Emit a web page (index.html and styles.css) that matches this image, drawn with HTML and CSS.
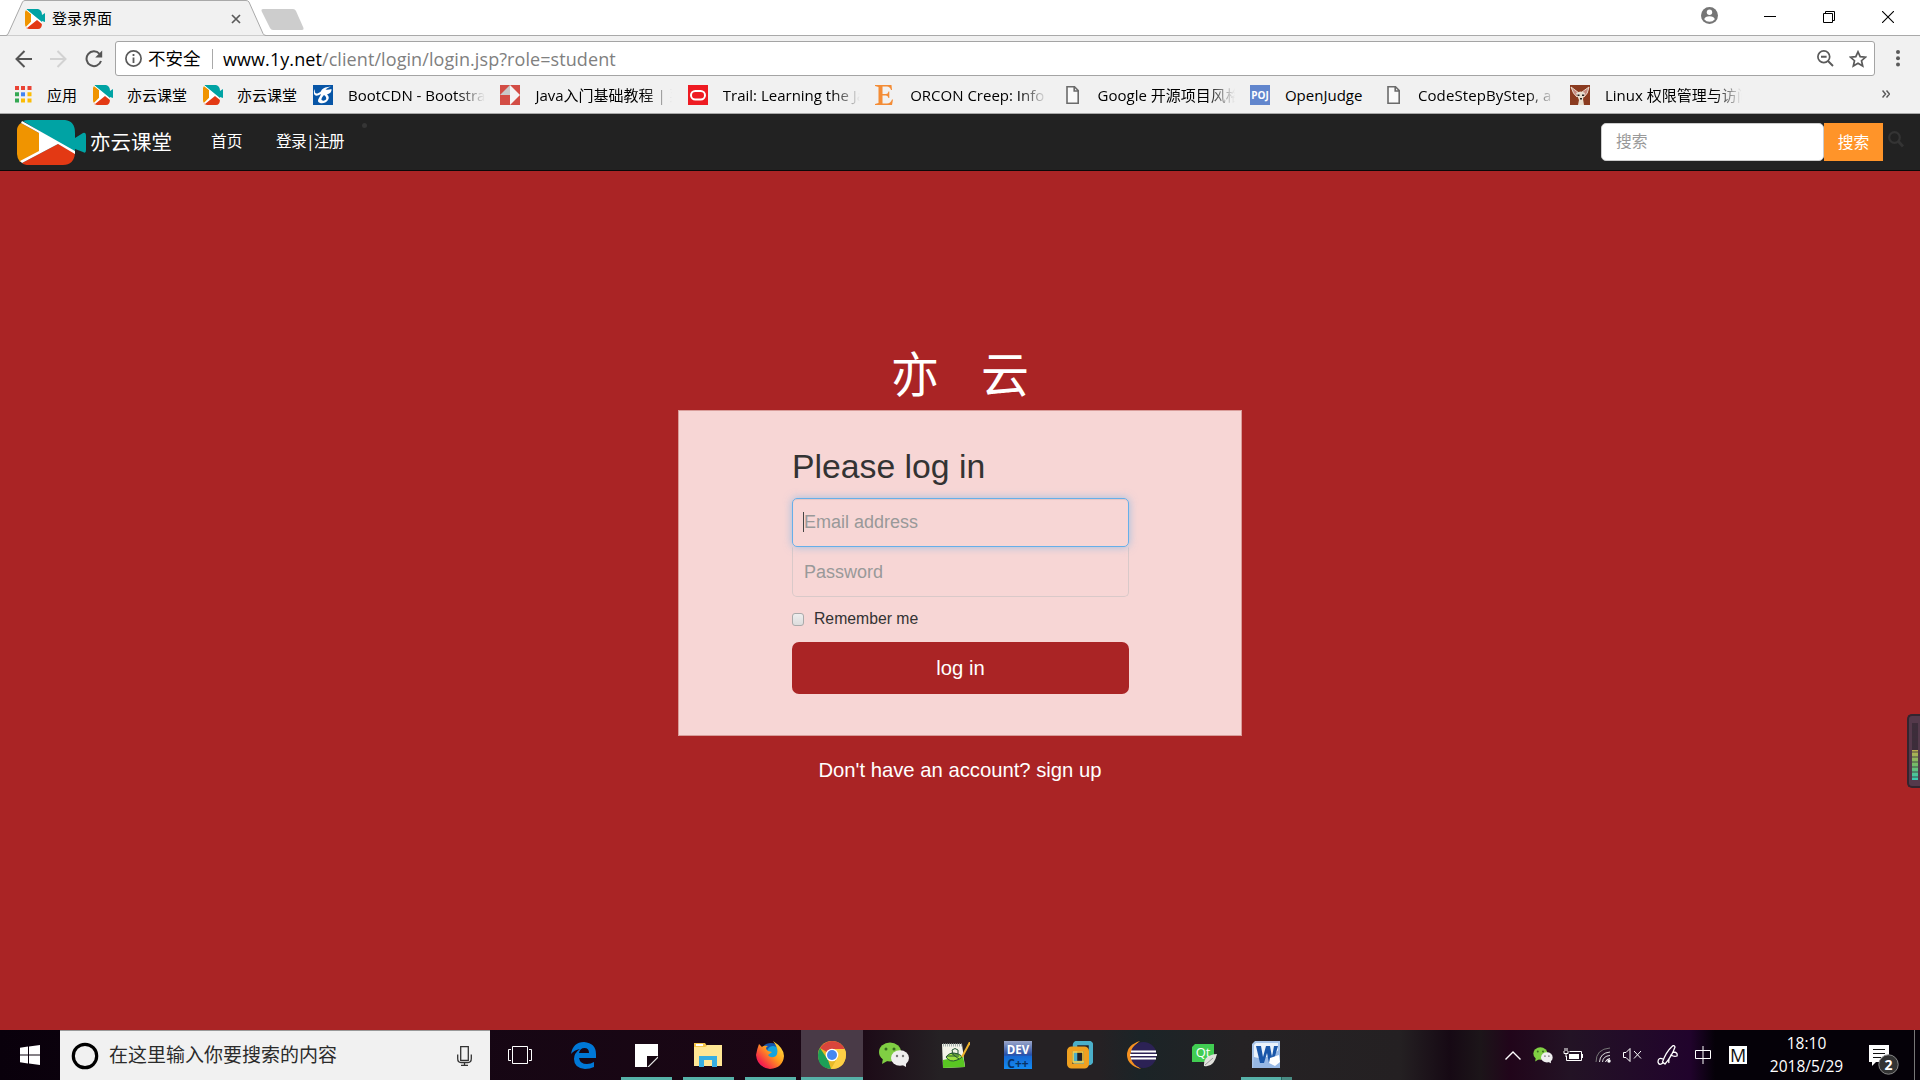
FILE: index.html
```html
<!DOCTYPE html>
<html lang="zh-CN">
<head>
<meta charset="utf-8">
<title>登录界面</title>
<link rel="stylesheet" href="styles.css">
</head>
<body>
<svg class="defs" width="0" height="0">
  <symbol id="camera" viewBox="0 0 69 45">
    <path fill="#00a3a4" d="M6 1Q8 0 12 0H48Q58 1 58 13V18L66 13Q69 12 69 16V30Q69 34 66 32L58 29V33Z"/>
    <path fill="#f09400" d="M4 3L22 13V32L3 42Q0 38 0 34V10Q0 6 4 3Z"/>
    <path fill="#e33914" d="M41 24L58 33Q57 45 46 45H12Q7 45 5 43Z"/>
    <path fill="#fff" d="M5 1L58 31V34L41 24L5 43L3 41L22 31V13L4 3Z"/>
  </symbol>
  <symbol id="camera-small" viewBox="0 0 20 20">
    <path fill="#00a3a4" d="M1 0H13Q17 1 17 6L20 4V13L17 12V14Z"/>
    <path fill="#f09400" d="M1 1L6 5V13L1 18Q0 17 0 15V3Z"/>
    <path fill="#e33914" d="M12 10L17 14Q17 20 13 20H4L1 19Z"/>
    <path fill="#fff" d="M1 0L17 13V15L12 11L2 19L1 18L6 13V5L1 1Z"/>
  </symbol>
  <symbol id="doc" viewBox="0 0 20 20"><path d="M4 1.8H11.5L15.2 5.5V18.2H4ZM11.2 2V6H15" fill="#fafafa" stroke="#6b6b6b" stroke-width="1.6"/></symbol>
  <symbol id="wechat" viewBox="0 0 30 26">
    <ellipse cx="11" cy="10" rx="11" ry="9.5" fill="#80cf43"/><path d="M4 16L3 22L10 18Z" fill="#80cf43"/>
    <circle cx="7" cy="7" r="1.5" fill="#386b20"/><circle cx="15" cy="7" r="1.5" fill="#386b20"/>
    <ellipse cx="21" cy="16" rx="9" ry="7.8" fill="#efefef"/><path d="M22 22L27 25V20Z" fill="#efefef"/>
    <circle cx="18" cy="14" r="1.2" fill="#777"/><circle cx="24" cy="14" r="1.2" fill="#777"/>
  </symbol>
</svg>

<header class="tabs">
  <svg class="tab-shape" width="310" height="36"><path d="M0 35.5H6Q7.500 35.500 8.500 33L22.500 2Q23.300.500 25 .500H246Q248 .500 249 2L263 33.500Q264 35.500 266 35.500H310" fill="#f1f1f1" stroke="#a9a9a9"/><path d="M263 9H293Q295 9 296 11L303.500 28Q304 30 302 30H273Q271 30 270 28L261.500 11Q261 9 263 9Z" fill="#cdcdcd"/></svg>
  <div class="tab"><svg width="20" height="20"><use href="#camera-small"/></svg><span class="tab-title">登录界面</span>
    <svg width="10" height="10"><path d="M1 1L9 9M9 1L1 9" stroke="#5a5a5a" stroke-width="1.700"/></svg></div>
  <div class="window-buttons">
    <svg width="17" height="17" viewBox="0 0 17 17"><circle cx="8.500" cy="8.500" r="8.500" fill="#757575"/><circle cx="8.500" cy="5.200" r="2.700" fill="#fff"/><path d="M3.200 12.200Q4 9.300 8.500 9.300T13.800 12.200Q11.800 14.800 8.500 14.800T3.200 12.200Z" fill="#fff"/></svg>
    <svg width="12" height="12"><path d="M0 5.500H12" stroke="#000"/></svg>
    <svg width="12" height="12"><path d="M.500 2.500H9.500V11.500H.500ZM2.500 2.500V.500H11.500V9.500H9.500" fill="none" stroke="#000"/></svg>
    <svg width="12" height="12"><path d="M0 0L12 12M12 0L0 12" stroke="#000" stroke-width="1.100"/></svg>
  </div>
</header>

<div class="toolbar">
  <svg width="17" height="18"><path d="M17 9H2M9.500 1L1.500 9L9.500 17" fill="none" stroke="#555" stroke-width="2"/></svg>
  <svg width="17" height="18"><path d="M0 9H15M7.500 1L15.500 9L7.500 17" fill="none" stroke="#d2d2d2" stroke-width="2"/></svg>
  <svg width="18" height="18"><path d="M14.500 3.800A7.400 7.400 0 1 0 16 11" fill="none" stroke="#555" stroke-width="2"/><path d="M17.200 .500V7.500H10.200Z" fill="#555"/></svg>
  <div class="address">
    <svg width="17" height="17"><circle cx="8.500" cy="8.500" r="7.600" fill="none" stroke="#5a5a5a" stroke-width="1.700"/><path d="M8.500 7.500V13M8.500 4V6" stroke="#5a5a5a" stroke-width="1.800"/></svg>
    <span class="insecure">不安全</span>
    <span class="url"><b>www.1y.net</b>/client/login/login.jsp?role=student</span>
    <svg class="zoom-icon" width="17" height="17"><circle cx="6.800" cy="6.800" r="5.900" fill="none" stroke="#5a5a5a" stroke-width="1.700"/><path d="M4 6.800H9.600M11 11L16 16" stroke="#5a5a5a" stroke-width="1.900"/></svg>
    <svg width="18" height="18"><path d="M9 1.800L11.200 6.600L16.600 7.100L12.500 10.700L13.700 16L9 13.200L4.300 16L5.500 10.700L1.400 7.100L6.800 6.600Z" fill="none" stroke="#5a5a5a" stroke-width="1.700"/></svg>
  </div>
  <svg width="4" height="17"><g fill="#5a5a5a"><circle cx="2" cy="2" r="2"/><circle cx="2" cy="8.200" r="2"/><circle cx="2" cy="14.500" r="2"/></g></svg>
</div>

<nav class="bookmarks">
  <a class="apps"><svg width="17" height="17"><g fill="#ea4335"><path d="M0 0h4v4H0zM6 0h4v4H6zM12.500 0h4v4h-4z"/></g><path fill="#34a853" d="M0 6.300h4v4H0zM0 12.500h4v4H0z"/><path fill="#4285f4" d="M6 6.300h4v4H6z"/><path fill="#fbbc05" d="M12.500 6.300h4v4h-4zM6 12.500h4v4H6zM12.500 12.500h4v4h-4z"/></svg><span>应用</span></a>
  <a class="w110"><svg width="20" height="20"><use href="#camera-small"/></svg><span>亦云课堂</span></a>
  <a class="w110"><svg width="20" height="20"><use href="#camera-small"/></svg><span>亦云课堂</span></a>
  <a><svg width="20" height="20"><path fill="#0755a6" d="M0 0H20V20H0Z"/><path fill="#fff" d="M2 4Q1 9 4.500 8.500Q8 7.500 9 4.500Q11 2 18 1.500Q15 2.500 12.500 4.500Q15 5 18.500 4Q19 8 14 9.500Q17 12 15 15Q12 19 7 18Q3.500 17 6 13Q7.500 10.500 8 9Q2.500 12.500 1 9Q0 6 2 4ZM11 10Q8 13 8.500 15Q11 16.500 13 14.500Q14 12 11 10Z" fill-rule="evenodd"/></svg><span class="fade">BootCDN - Bootstrap</span></a>
  <a><svg width="20" height="20"><path fill="#d34d45" d="M0 0H20V20H0Z"/><path fill="#c9c9c9" d="M0 10L10 0V10Z"/><path fill="#f4f4f4" d="M10 0L20 10L10 20Z"/></svg><span class="fade java">Java入门基础教程 | 菜鸟</span></a>
  <a><svg width="20" height="20"><path fill="#ee1b22" d="M0 0H20V20H0Z"/><rect x="3" y="6" width="14" height="8.500" rx="4.250" fill="none" stroke="#fff" stroke-width="2"/></svg><span class="fade trail">Trail: Learning the Java</span></a>
  <a><svg width="20" height="20"><path fill="#f48c35" d="M0 0H16.500L17 5H16Q15 1.500 12 1.500H7.500V9H11Q13 9 13.500 6.500H14.300V13H13.500Q13 10.500 11 10.500H7.500V18.500H12Q15.500 18.500 17 14.500H18L17 20H0V19L3.500 18V2L0 1Z"/></svg><span class="fade orcon">ORCON Creep: Info</span></a>
  <a><svg width="20" height="20"><use href="#doc"/></svg><span class="fade google">Google 开源项目风格</span></a>
  <a class="w134"><svg width="20" height="20"><path fill="#6286cd" d="M0 0H20V20H0Z"/><text x="10" y="14" text-anchor="middle" font-size="10" font-weight="bold" fill="#fff">POJ</text></svg><span class="judge">OpenJudge</span></a>
  <a class="w186"><svg width="20" height="20"><use href="#doc"/></svg><span class="fade step">CodeStepByStep, a</span></a>
  <a><svg width="20" height="20"><path fill="#8b3b20" d="M0 0H20V20H0Z"/><path d="M1 2L9 8L7 12Q3 9 1 2ZM19 2L12 7L14 12Q18 9 19 2Z" fill="#c68a80" stroke="#ead8c8"/><path d="M6 8Q11 5 15 8L13 14L14 20H8L9 15Z" fill="#e9dfd0"/><path d="M7.500 9.500h2v1.500h-2zM12 9.500h2v1.500h-2zM10 13h2v1.500h-2z" fill="#222"/></svg><span class="fade linux">Linux 权限管理与访问</span></a>
  <svg class="more" width="8" height="8"><path d="M.500.500L3.500 4L.500 7.500M4.500.500L7.500 4L4.500 7.500" fill="none" stroke="#5a5a5a" stroke-width="1.500"/></svg>
</nav>

<nav class="site-nav">
  <svg width="69" height="45"><use href="#camera"/></svg>
  <a class="brand">亦云课堂</a><a class="home">首页</a><a class="auth">登录|注册</a><i class="dot"></i>
  <form class="search"><input placeholder="搜索"><button type="button">搜索</button>
    <svg width="16" height="17"><circle cx="6.500" cy="6.500" r="5.300" fill="none" stroke="#343434" stroke-width="2.200"/><path d="M10.500 10.500L15 15.500" stroke="#343434" stroke-width="2.800"/></svg></form>
</nav>

<main>
  <h1>亦<span>云</span></h1>
  <form class="login">
    <h2>Please log in</h2>
    <div class="email"><input placeholder="Email address"><i class="caret"></i></div>
    <input class="password" type="password" placeholder="Password">
    <label><i class="check"></i>Remember me</label>
    <button type="button">log in</button>
  </form>
  <p>Don't have an account? sign up</p>
  <aside><div class="meter"></div></aside>
</main>

<footer>
  <div class="start"><svg width="20" height="20"><path fill="#fff" d="M0 2.700L8 1.600V9.500H0ZM9 1.500L20 0V9.500H9ZM0 10.500H8V18.400L0 17.300ZM9 10.500H20V20L9 18.500Z"/></svg></div>
  <div class="task-search"><svg width="28" height="28"><circle cx="14" cy="14" r="11.700" fill="none" stroke="#000" stroke-width="3.200"/></svg><span>在这里输入你要搜索的内容</span>
    <svg width="15" height="20"><path d="M3.700.700H11.300V14.300H3.700ZM.700 8.500V12.500Q.700 16.500 4 16.500H11Q14.300 16.500 14.300 12.500V8.500M7.500 16.500V19.500M4 19.300H11" stroke="#333" stroke-width="1.300" fill="none"/></svg></div>
  <div class="apps-bar">
    <div><svg width="24" height="18"><path d="M4.500.500H19.500V17.500H4.500ZM3 3.500H.500V14.500H3M21 3.500H23.500V14.500H21" fill="none" stroke="#fff"/></svg></div>
    <div><svg width="25" height="27"><path d="M0 12Q2 0 13 0Q25 1 25 12V16H8Q9 22 16 22Q20 22 23 20V25Q19 27 14 27Q3 26 3 17Q3 11 9 7Q3 8 0 12ZM8 11H18Q18 6 13.500 6Q9 6 8 11Z" fill="#0078d7"/></svg></div>
    <div class="open"><svg width="23" height="23"><path fill="#fff" d="M0 0H23V12H12V23H0Z"/><path fill="#ddd" d="M12 23L23 12V23Z"/><path fill="#160611" d="M12 12H23L12 23Z"/><path fill="#160611" d="M14 23L23 14V23Z"/></svg></div>
    <div class="open"><svg width="28" height="24"><path fill="#f6c64c" d="M0 1H10L13 4H28V20H0Z"/><path fill="#ffe694" d="M0 3H10L13 2H28V23H0Z"/><path fill="#f6c64c" d="M0 0H11L13 3L11 4H0Z"/><path fill="#fff" d="M2 1h7v2H2z"/><path fill="#36aee2" d="M5 13H23V24H18V17H10V24H5Z"/></svg></div>
    <div class="open"><svg width="28" height="28"><defs><linearGradient id="ff" x1="1" y1="0" x2="0" y2="1"><stop stop-color="#fff14a"/><stop offset=".450" stop-color="#ff9b1d"/><stop offset=".800" stop-color="#f5224b"/><stop offset="1" stop-color="#d91c96"/></linearGradient></defs><circle cx="15" cy="13" r="11" fill="#1656ae"/><circle cx="17" cy="11" r="6" fill="#14a3de"/><path fill="url(#ff)" d="M3 3L6 6Q8 4 12 5Q8 7 12 10L16 11L12 14Q15 18 20 15Q24 9 17 0Q28 7 28 15Q27 27 14 28Q1 26 0 14Q1 8 3 3Z"/></svg></div>
    <div class="open active"><svg width="28" height="28"><circle cx="14" cy="14" r="14" fill="#e8b927"/><path d="M14 14L2 7Q7 0 14 0Q23 0 26.500 8H14Z" fill="#d9453c"/><path d="M2 7L10 19L13 28Q0 27 0 14Q0 10 2 7Z" fill="#1da057"/><path d="M26.500 8Q28 10 28 14Q27 28 13 28L20 16L16 8Z" fill="#fdcf45"/><circle cx="14" cy="14" r="6.300" fill="#fff"/><circle cx="14" cy="14" r="5" fill="#4688f1"/></svg></div>
    <div><svg width="30" height="26"><use href="#wechat"/></svg></div>
    <div><svg width="28" height="27"><path fill="#f3f3e8" d="M0 2H20L23 25L1 26Z"/><path d="M1 3H20" stroke="#a4adaa" stroke-width="3" stroke-dasharray="1 1"/><path d="M1 18L21 14L23 25L1 26Z" fill="#59c622"/><path d="M4 15Q8 9 16 12T15 18Q8 21 4 15" fill="#9dde42" stroke="#245532"/><path d="M10 8Q13 5 16 8V12H11ZM5 14H17M9 11L17 17" fill="none" stroke="#245532"/><path d="M28 0L20 15" stroke="#efb32b" stroke-width="2"/></svg></div>
    <div><svg width="28" height="28"><defs><linearGradient id="dev" x2="0" y2="1"><stop stop-color="#9ba6c9"/><stop offset=".500" stop-color="#2850a8"/><stop offset=".550" stop-color="#1769d3"/><stop offset="1" stop-color="#138bf2"/></linearGradient></defs><path fill="url(#dev)" d="M0 0H28V28H0Z"/><text x="14" y="12.500" text-anchor="middle" font-size="11.500" font-weight="bold" fill="#fff">DEV</text><text x="14" y="26.500" text-anchor="middle" font-size="12" font-weight="bold" fill="#073164">C++</text></svg></div>
    <div><svg width="26" height="28"><rect x="8" y="2" width="16" height="20" rx="2" fill="none" stroke="#4bafc9" stroke-width="4.500"/><rect x="2.500" y="8" width="17" height="17" rx="2" fill="none" stroke="#efa020" stroke-width="5"/><path d="M6 11H16V21H6Z" fill="none" stroke="#ffd246" stroke-width="1.500"/></svg></div>
    <div><svg width="30" height="28"><path d="M13 0Q0 4 0 14T14 28Q3 20 4 13T13 0Z" fill="#f59120"/><circle cx="16.500" cy="14" r="13" fill="#2c2255"/><path d="M4 10.500H29M3 14H30M4 17.500H29" stroke="#fff" stroke-width="1.800"/></svg></div>
    <div><svg width="25" height="23"><path d="M3 0H22V18H0V3Z" fill="#41cd52"/><text x="11" y="13" text-anchor="middle" font-size="13" fill="#fff">Qt</text><path d="M12 22Q11 11 25 10Q22 24 12 22Z" fill="#e0e0dc"/><path d="M13 21L21 14" stroke="#999"/></svg></div>
    <div class="open word"><svg width="28" height="28"><path d="M3 0H28V27H0V3Z" fill="#a9c5ea"/><path d="M4 2H26V24H2V4Z" fill="#eaf2fb"/><path d="M2 16Q14 20 28 8V27H1Z" fill="#97b8e4"/><path d="M4 5H9L11 16L14 5H18L20 16L22 5H26L21 22H17L15 12L12 22H8Z" fill="#1956a9"/><path d="M18 17L27 14L28 21L23 25L17 22Z" fill="#fff"/></svg></div>
  </div>
  <div class="tray">
    <svg width="16" height="9"><path d="M.500 8.500L8 1L15.500 8.500" stroke="#fff" stroke-width="1.400" fill="none"/></svg>
    <svg width="20" height="17" viewBox="0 0 30 26"><use href="#wechat"/></svg>
    <svg width="20" height="14"><path d="M6.500 3.500H18.500V12.500H3.500V8M1 3V5.500H5V3M2 0V3M4 0V3M3 6V9M19.500 6V10" fill="none" stroke="#fff"/><path d="M6 6H16V11H6Z" fill="#fff"/></svg>
    <svg width="16" height="16"><g fill="none"><path d="M1 15Q1 2 15 1" stroke="#777"/><path d="M4.500 15Q5 6 15 5M7.500 15Q8 9 15 8.500" stroke="#ddd"/><path d="M10.500 15Q11 12 15 11.500" stroke="#fff"/></g><circle cx="14" cy="14" r="1.700" fill="#fff"/></svg>
    <svg width="19" height="14"><path d="M.500 4.500H3L7 .500V13.500L3 9.500H.500ZM11 3L18 10.500M18 3L11 10.500" stroke="#fff" fill="none"/></svg>
    <svg width="21" height="21"><path d="M8 19L5.500 17Q9 7 15 1.500Q17-.500 18 2Q15 11 8 19ZM6 14Q1 12 1 17Q2 21 6 18M16 7Q21 7 20 11Q17 12 14 10Q11 15 12 18" stroke="#fff" stroke-width="1.300" fill="none"/></svg>
    <svg width="16" height="18"><path d="M.500 4.500H15.500V12.500H.500ZM8 0V18" stroke="#fff" fill="none"/></svg>
    <span class="ime">M</span>
    <div class="clock"><span>18:10</span><span>2018/5/29</span></div>
    <div class="notice"><svg width="30" height="30"><path d="M0 0H20V17H7L3 21V17H0Z" fill="#fff"/><path d="M4 4.500H16M4 8.500H16M4 12.500H12" stroke="#111"/><circle cx="19.500" cy="19.500" r="9.700" fill="#333" stroke="#888"/><text x="19.500" y="24.500" text-anchor="middle" font-size="14" font-weight="bold" fill="#fff">2</text></svg></div>
    <i class="edge-line"></i>
  </div>
</footer>
</body>
</html>
```

FILE: styles.css
```css
* { box-sizing: border-box; }
body { margin: 0; width: 1920px; height: 1080px; overflow: hidden; display: flex; flex-direction: column; background: #aa2425; font-family: "Open Sans", "Noto Sans CJK SC", sans-serif; }
svg { display: block; flex: none; }
.defs { position: absolute; }
input, button { font-family: inherit; margin: 0; outline: 0; }

.tabs { height: 36px; flex: none; position: relative; display: flex; justify-content: space-between; background: linear-gradient(#fff 35px, #a9a9a9 35px); }
.tab-shape { position: absolute; left: 0; top: 0; }
.tab { position: relative; display: flex; align-items: center; width: 241px; height: 38px; padding-left: 25px; font-size: 15px; }
.tab-title { margin: -2px 0 0 7px; flex: 1; line-height: 36px; }
.window-buttons { display: flex; align-items: center; gap: 47px; padding-right: 26px; height: 34px; }
.window-buttons svg:first-child { margin: -4px -1px 0 0; }

.toolbar { height: 42px; flex: none; background: #f1f1f1; display: flex; align-items: center; padding: 3px 20px 0 15px; gap: 18px; }
.toolbar > svg:last-child { margin-left: 3px; }
.address { flex: 1; margin-left: -6px; height: 35px; background: #fff; border: 1px solid #a4a4a4; border-radius: 3px; display: flex; align-items: center; padding: 0 7px 0 9px; white-space: nowrap; }
.insecure { font-size: 17.500px; margin: -2px 0 0 6px; width: 64px; line-height: 30px; }
.url { flex: 1; font-size: 18px; line-height: 20px; padding-left: 10px; border-left: 1px solid #a9a9a9; color: #808080; letter-spacing: 0.080px; }
.url b { font-weight: 400; color: #000; }
.zoom-icon { margin-right: 15px; }

.bookmarks { height: 36px; flex: none; background: #f1f1f1; border-bottom: 1px solid #a9a9a9; display: flex; align-items: center; padding: 0 0 2px 15px; font-size: 15px; white-space: nowrap; }
.bookmarks a { width: 187.400px; display: flex; align-items: center; gap: 15px; }
.bookmarks a.apps { width: 78px; gap: 15px; }
.bookmarks a.w110 { width: 110px; gap: 14px; }
.bookmarks a.w134 { width: 134px; }
.bookmarks a.w186 { width: 186px; }
.bookmarks span { line-height: 24px; padding-top: 1px; }
.fade { width: 137px; overflow: hidden; -webkit-mask-image: linear-gradient(90deg, #000 80%, transparent); mask-image: linear-gradient(90deg, #000 80%, transparent); }
.step { letter-spacing: 0.100px; margin-left: -1px; }
.more { margin: 0 30px 1px auto; }

.site-nav { height: 57px; flex: none; display: flex; align-items: center; background: #222; border-bottom: 1px solid #080808; padding-left: 17px; color: #fff; font-size: 15.750px; }
.site-nav a { margin-top: -3px; }
.site-nav a.brand { font-size: 20.500px; margin-left: 4px; width: 121px; }
.home { width: 65px; }
.auth { width: 86px; letter-spacing: -0.800px; }
.dot { width: 5px; height: 5px; border-radius: 50%; background: #353535; margin-bottom: 34px; }
.search { margin-left: auto; display: flex; align-items: center; padding-right: 16px; }
.search input { width: 223px; height: 38px; border: 1px solid #ccc; border-radius: 5px; padding: 0 14px 2px; font-size: 15.750px; }
.search button { width: 59px; height: 38px; border: 0; padding: 0 0 2px; background: #ff9429; color: #fff; font-size: 15.750px; }
.search svg { margin: -5px 0 0 5px; }
::placeholder { color: #999; opacity: 1; }

main { flex: 1; position: relative; display: flex; flex-direction: column; align-items: center; font-family: "Liberation Sans", "Noto Sans CJK SC", sans-serif; }
h1 { color: #fff; font-size: 48px; font-weight: 400; line-height: 60px; margin: 175px 0 4px; }
h1 span { margin-left: 42px; }
.login { width: 564px; height: 326px; background: #f7d6d5; border: 1px solid #d99c99; padding: 35px 112px 0 113px; display: flex; flex-direction: column; }
h2 { margin: 0 0 11px; font-size: 33.750px; font-weight: 400; line-height: 41px; color: #333; }
.login input { display: block; width: 100%; height: 50px; background: transparent; border: 1px solid #d9c9c9; border-radius: 5px; font-size: 18px; padding: 0 11px; }
.email { position: relative; }
.email input { height: 49px; border: 1px solid #66afe9; box-shadow: 0 0 8px rgba(102,175,233,.6), inset 0 1px 1px rgba(0,0,0,.075); }
.caret { position: absolute; left: 11px; top: 14px; width: 1px; height: 20px; background: #444; }
.login .password { border-radius: 0 0 5px 5px; border-top-color: transparent; }
label { display: flex; align-items: center; gap: 10px; height: 22px; margin: 11px 0 12px; font-size: 15.750px; color: #333; }
.check { width: 12px; height: 13px; margin-top: 1px; border: 1px solid #aaa; border-radius: 3px; background: linear-gradient(#eee, #ddd); }
.login button { height: 52px; border: 0; border-radius: 7px; background: #aa2425; color: #fff; font-size: 20.250px; }
main p { margin: 22px 0 0; line-height: 24px; font-size: 20.250px; color: #fff; }
aside { position: absolute; right: 0; top: 543px; width: 13px; height: 74px; border: 2px solid #33252f; border-right: 0; border-radius: 5px 0 0 5px; background: #54394b; padding: 7px 2px 7px 3px; }
.meter { height: 57px; background: repeating-linear-gradient(transparent 0 3px, #39303a66 3px 5px), linear-gradient(#3d2c3a 27px, #bcae4e 27px, #72ba68 42px, #35cdb5); }

footer { height: 50px; flex: none; display: flex; color: #fff; background: linear-gradient(90deg, #09000b 0, #150613 400px, #1b0715 850px, #252124 940px, #252124 1100px, #1b2427 1140px, #252224 1240px, #242022 1400px, #160914 1450px, #1c1519 1480px, #21051a 1510px, #231325 1570px, #21032c 1690px, #050108 1715px, #050108); }
.start { width: 60px; display: flex; align-items: center; justify-content: center; }
.task-search { width: 430px; background: #f1f1f1; border-top: 1px solid #999; color: #2b2b2b; display: flex; align-items: center; padding: 0 18px 0 11px; font-size: 19px; }
.task-search span { margin: -3px 0 0 10px; flex: 1; }
.apps-bar { display: flex; }
.apps-bar > div { width: 62px; height: 50px; display: flex; align-items: center; justify-content: center; position: relative; }
.apps-bar > div:first-child { width: 62px; padding-right: 2px; }
.apps-bar > div:nth-child(2) { margin-right: 1px; }
.open::after { content: ""; position: absolute; left: 6px; bottom: 0; width: 51px; height: 3px; background: #56b1a8; }
.active { background: #493a47; }
.apps-bar .active::after { left: 0; width: 62px; }
.word::after { background: linear-gradient(90deg, #56b1a8 40px, #29645e 40px 41px, #488b83 41px); }
.tray { margin-left: auto; display: flex; align-items: center; }
.tray > svg { margin-right: 12px; }
.tray > svg:nth-child(2) { margin-right: 10px; }
.tray > svg:nth-child(5) { margin-right: 15px; }
.tray > svg:nth-child(6) { margin-right: 17px; }
.tray > svg:nth-child(7) { margin-right: 18px; }
.ime { width: 18px; height: 18px; background: #fff; color: #111; font-size: 18px; line-height: 18px; text-align: center; }
.clock { width: 119px; display: flex; flex-direction: column; align-items: center; font-size: 15.500px; line-height: 23px; }
.notice { margin: 10px 0 0 3px; width: 45px; }
.edge-line { width: 6px; height: 50px; border-left: 1px solid #777; }
```
